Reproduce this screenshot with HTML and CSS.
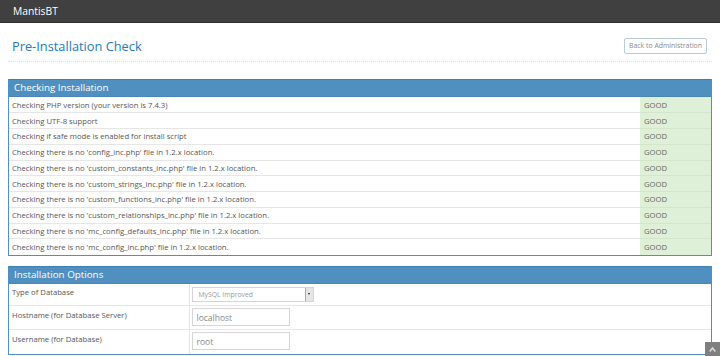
FILE: index.html
```html
<!DOCTYPE html>
<html lang="en">
<head>
  <meta charset="UTF-8">
  <title>MantisBT Administration - Installation</title>
  <link rel="stylesheet" href="styles.css">
</head>
<body>
  <div class="navbar">
    <span class="brand">MantisBT</span>
  </div>

  <div class="main">
    <div class="page-header">
      <h1>Pre-Installation Check</h1>
      <a class="btn-back" href="#">Back to Administration</a>
    </div>

    <!-- Checking Installation -->
    <div class="widget-box">
      <div class="widget-header">Checking Installation</div>
      <table class="check-table">
        <tr><td>Checking PHP version (your version is 7.4.3)</td><td class="good">GOOD</td></tr>
        <tr><td>Checking UTF-8 support</td><td class="good">GOOD</td></tr>
        <tr><td>Checking if safe mode is enabled for install script</td><td class="good">GOOD</td></tr>
        <tr><td>Checking there is no 'config_inc.php' file in 1.2.x location.</td><td class="good">GOOD</td></tr>
        <tr><td>Checking there is no 'custom_constants_inc.php' file in 1.2.x location.</td><td class="good">GOOD</td></tr>
        <tr><td>Checking there is no 'custom_strings_inc.php' file in 1.2.x location.</td><td class="good">GOOD</td></tr>
        <tr><td>Checking there is no 'custom_functions_inc.php' file in 1.2.x location.</td><td class="good">GOOD</td></tr>
        <tr><td>Checking there is no 'custom_relationships_inc.php' file in 1.2.x location.</td><td class="good">GOOD</td></tr>
        <tr><td>Checking there is no 'mc_config_defaults_inc.php' file in 1.2.x location.</td><td class="good">GOOD</td></tr>
        <tr><td>Checking there is no 'mc_config_inc.php' file in 1.2.x location.</td><td class="good">GOOD</td></tr>
      </table>
    </div>

    <!-- Installation Options -->
    <div class="widget-box">
      <div class="widget-header">Installation Options</div>
      <table class="options-table">
        <tr>
          <td class="label">Type of Database</td>
          <td>
            <div class="fake-select">
              <span>MySQL Improved</span>
              <span class="arrow"></span>
            </div>
          </td>
        </tr>
        <tr>
          <td class="label">Hostname (for Database Server)</td>
          <td><input type="text" value="localhost"></td>
        </tr>
        <tr>
          <td class="label">Username (for Database)</td>
          <td><input type="text" value="root"></td>
        </tr>
      </table>
    </div>
  </div>

  <a class="scroll-up" href="#">
    <svg width="7" height="7" viewBox="0 0 10 10"><path d="M1 8 L5 3 L9 8" fill="none" stroke="#ddd" stroke-width="2.2"/></svg>
  </a>
</body>
</html>
```

FILE: styles.css
```css
body {
  margin: 0;
  font-family: "Open Sans", sans-serif;
  color: #393939;
  background: #fff;
  overflow: hidden;
}
.navbar {
  height: 22px;
  background: #404040;
  border-bottom: 1px solid #2e2e2e;
  display: flex;
  align-items: center;
  padding-left: 13px;
}
.brand {
  color: #fff;
  font-size: 10.3px;
}
.main {
  padding: 0 8px;
}
.page-header {
  display: flex;
  justify-content: space-between;
  align-items: center;
  height: 31px;
  padding: 7px 5px 0 4px;
  margin-bottom: 17px;
  border-bottom: 1px dotted #e2e2e2;
}
.page-header h1 {
  margin: 0;
  font-size: 12.8px;
  font-weight: 400;
  color: #2679b5;
}
.btn-back {
  font-size: 6.9px;
  color: #8a8a8a;
  text-decoration: none;
  border: 1px solid #b9c9d9;
  border-radius: 2px;
  padding: 3px 4px;
  line-height: 8px;
}
.widget-box {
  border: 1px solid #5090c1;
  border-top: none;
  margin-bottom: 10px;
}
.widget-header {
  background: #5090c1;
  border-top: 1px solid #3f7fb0;
  color: #fff;
  font-size: 9.8px;
  height: 16px;
  line-height: 16px;
  padding-left: 5px;
  border-bottom: 1px solid #4a86b6;
}
table {
  width: 100%;
  border-collapse: collapse;
  table-layout: fixed;
}
td {
  box-sizing: border-box;
}
.check-table td {
  font-size: 7.7px;
  color: #555;
  height: 15.75px;
  padding: 0 3px;
  border-top: 1px solid #e6e6e6;
  white-space: nowrap;
}
.check-table tr:first-child td {
  border-top: none;
}
.check-table td.good {
  width: 71px;
  background: #dff0d8;
  padding-left: 4px;
  color: #666;
  border-top-color: #d3e6cb;
}
.options-table td {
  font-size: 7.7px;
  color: #555;
  border-top: 1px solid #e6e6e6;
  vertical-align: top;
  padding: 2px 3px 3px 2px;
  height: 24px;
}
.options-table tr:first-child td {
  border-top: none;
  height: 22px;
  padding-top: 3px;
}
.options-table td.label {
  width: 180px;
  padding-top: 4px;
  padding-left: 3px;
  border-right: 1px solid #e6e6e6;
}
.fake-select {
  width: 122px;
  height: 15px;
  box-sizing: border-box;
  border: 1px solid #d5d5d5;
  display: flex;
  align-items: center;
  justify-content: space-between;
  font-size: 6.8px;
  color: #999;
  padding-left: 6px;
}
.fake-select .arrow {
  width: 7px;
  height: 13px;
  background: #e6e6e6;
  border-left: 1px solid #aaa;
  position: relative;
}
.fake-select .arrow::after {
  content: "";
  position: absolute;
  left: 2px;
  top: 5px;
  border-left: 1.5px solid transparent;
  border-right: 1.5px solid transparent;
  border-top: 2px solid #222;
}
input {
  width: 98px;
  height: 18px;
  box-sizing: border-box;
  border: 1px solid #d5d5d5;
  font-family: "Open Sans", sans-serif;
  font-size: 8.5px;
  color: #888;
  padding: 0 4px;
  margin: 0;
  display: block;
}
.scroll-up {
  position: fixed;
  right: 0;
  bottom: 0;
  width: 15px;
  height: 14px;
  background: #7f7f7f;
  display: flex;
  align-items: center;
  justify-content: center;
}
```
